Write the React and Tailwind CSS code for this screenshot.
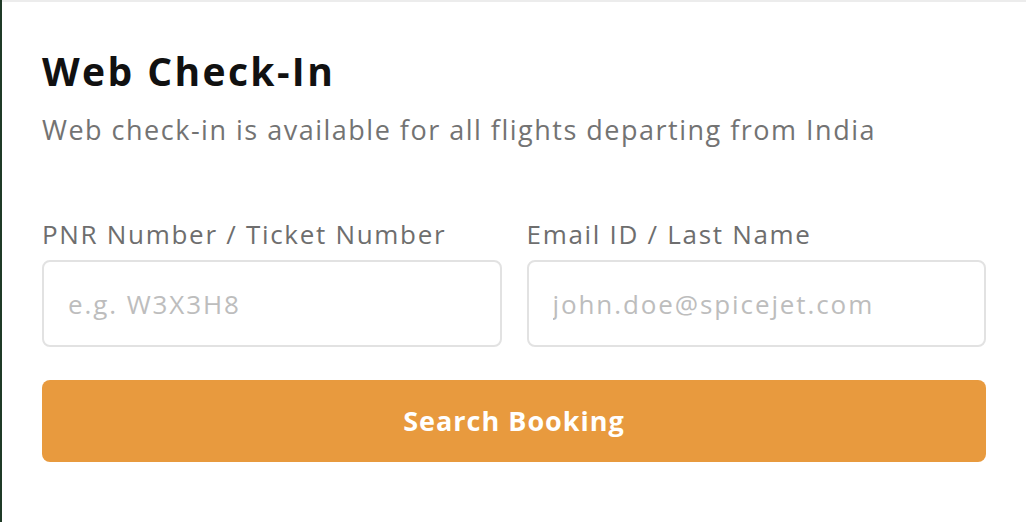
export default function App() {
  const font = { fontFamily: '"Open Sans", "Noto Sans", sans-serif' };
  return (
    <div className="min-h-[522px] bg-[#1f3a27] pl-[2px]" style={font}>
      <div className="min-h-[522px] border-t-2 border-[#ececec] bg-white px-10 pt-[43px]">
        <h1 className="text-[39px] font-bold leading-[52px] tracking-[2.4px] text-[#111111]">Web Check-In</h1>
        <p className="mt-[15px] text-[27px] leading-[36px] tracking-[1.5px] text-[#737373]">
          Web check-in is available for all flights departing from India
        </p>

        <div className="mt-[68px] grid grid-cols-2 gap-[25px]">
          <div className="flex flex-col">
            <label className="text-[26px] leading-[36px] tracking-[1.7px] text-[#6e6e6e]">PNR Number / Ticket Number</label>
            <input
              className="mt-[8px] h-[87px] rounded-lg border-2 border-[#e2e2e2] px-6 text-[26px] tracking-[1.9px] text-[#333] outline-none placeholder:text-[#bdbdbd]"
              placeholder="e.g. W3X3H8"
            />
          </div>
          <div className="flex flex-col">
            <label className="text-[26px] leading-[36px] tracking-[1.7px] text-[#6e6e6e]">Email ID / Last Name</label>
            <input
              className="mt-[8px] h-[87px] rounded-lg border-2 border-[#e2e2e2] px-6 text-[26px] tracking-[1.9px] text-[#333] outline-none placeholder:text-[#bdbdbd]"
              placeholder="john.doe@spicejet.com"
            />
          </div>
        </div>

        <button className="mt-[33px] h-[82px] w-full rounded-lg bg-[#e89a3e] text-[27px] font-bold tracking-[1px] text-white">
          Search Booking
        </button>
      </div>
    </div>
  );
}
